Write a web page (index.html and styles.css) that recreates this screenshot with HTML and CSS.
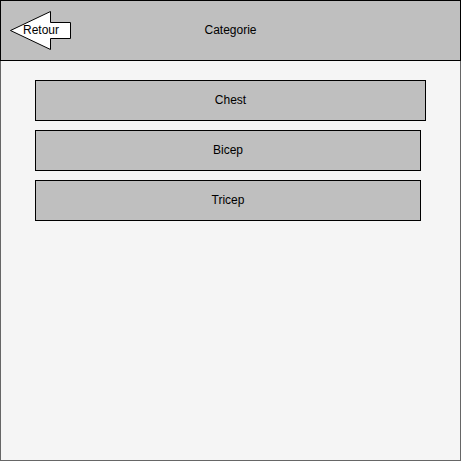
FILE: index.html
```html
<!DOCTYPE html>
<html>
<head>
<meta charset="utf-8">
<link rel="stylesheet" href="styles.css">
</head>
<body>
<div class="screen">
  <header class="topbar">
    <div class="back">
      <svg class="back-arrow" width="63" height="41" viewBox="0 0 63 41">
        <polygon points="1.5,20.5 41.5,1.5 41.5,12.5 61.5,12.5 61.5,28.5 41.5,28.5 41.5,39.5" fill="#ffffff" stroke="#000000" stroke-width="1"/>
        <text x="32" y="24" text-anchor="middle" class="back-label">Retour</text>
      </svg>
    </div>
    <div class="title">Categorie</div>
    <div class="spacer"></div>
  </header>
  <main class="content">
    <div class="cat cat-wide">Chest</div>
    <div class="cat">Bicep</div>
    <div class="cat">Tricep</div>
  </main>
</div>
</body>
</html>
```
FILE: styles.css
```css
html, body {
  margin: 0;
  padding: 0;
  background: #ffffff;
}
.screen {
  width: 461px;
  height: 461px;
  display: flex;
  flex-direction: column;
  font-family: "Liberation Sans", Arial, sans-serif;
  font-size: 12px;
  color: #000;
}
.topbar {
  box-sizing: border-box;
  height: 61px;
  border: 1px solid #000;
  background: #bfbfbf;
  display: grid;
  grid-template-columns: 1fr auto 1fr;
  align-items: center;
}
.back {
  padding-left: 8px;
  height: 41px;
}
.back-arrow {
  display: block;
}
.back-label {
  font-family: "Liberation Sans", Arial, sans-serif;
  font-size: 12px;
  fill: #000;
}
.title {
  text-align: center;
  line-height: 14px;
  padding-bottom: 2px;
}
.content {
  box-sizing: border-box;
  flex: 1;
  background: #f5f5f5;
  border: 1px solid #666666;
  border-top: none;
  padding: 19px 0 0 34px;
  display: flex;
  flex-direction: column;
  align-items: flex-start;
  gap: 9px;
}
.cat {
  box-sizing: border-box;
  width: 386px;
  height: 41px;
  padding-bottom: 2px;
  border: 1px solid #000;
  background: #bfbfbf;
  display: flex;
  align-items: center;
  justify-content: center;
}
.cat-wide {
  width: 391px;
}
```
